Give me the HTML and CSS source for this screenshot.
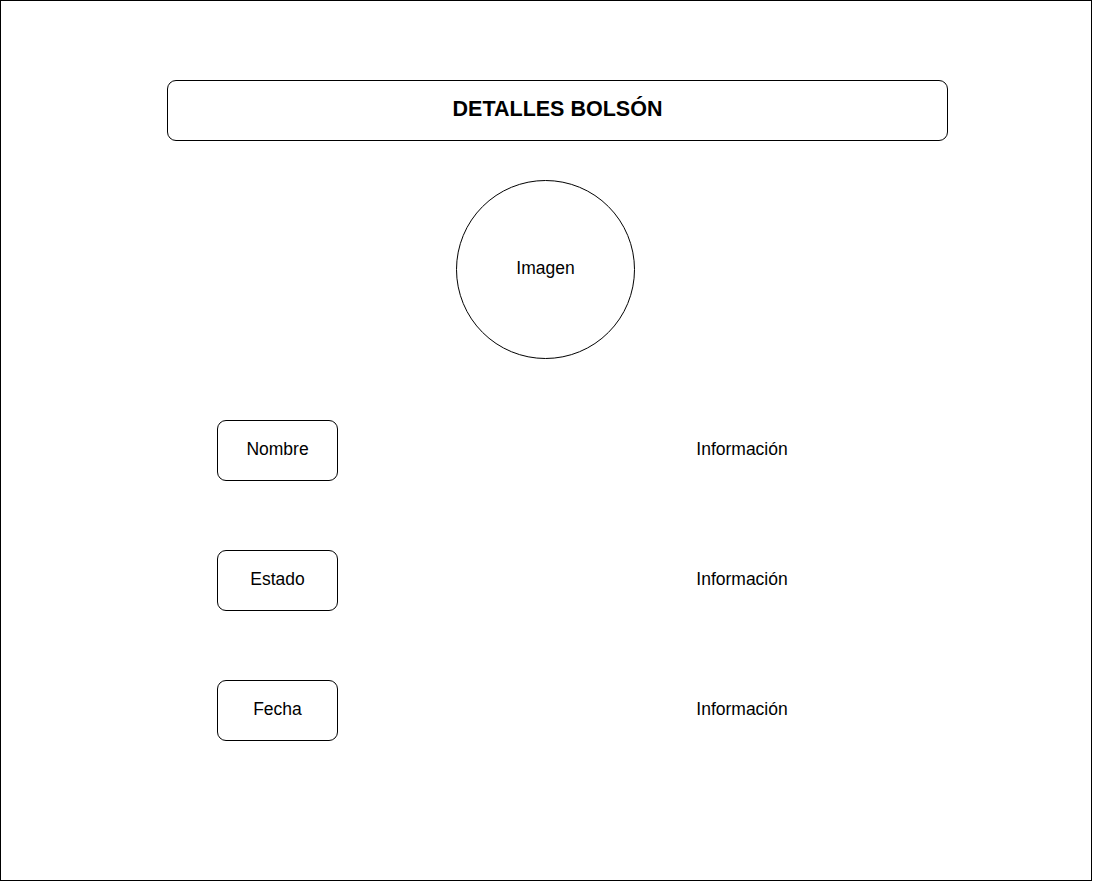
FILE: index.html
```html
<!DOCTYPE html>
<html lang="es">
<head>
<meta charset="utf-8">
<title>Detalles Bolsón</title>
<link rel="stylesheet" href="styles.css">
</head>
<body>
<div class="frame">
  <div class="header">DETALLES BOLSÓN</div>
  <div class="image-circle">Imagen</div>
  <div class="rows">
    <div class="row">
      <div class="label">Nombre</div>
      <div class="info">Información</div>
    </div>
    <div class="row">
      <div class="label">Estado</div>
      <div class="info">Información</div>
    </div>
    <div class="row">
      <div class="label">Fecha</div>
      <div class="info">Información</div>
    </div>
  </div>
</div>
</body>
</html>
```
FILE: styles.css
```css
html, body {
  margin: 0;
  padding: 0;
  background: #ffffff;
}
body {
  font-family: "Liberation Sans", Arial, Helvetica, sans-serif;
  color: #000000;
}
.frame {
  box-sizing: border-box;
  width: 1092px;
  height: 881px;
  border: 1px solid #000000;
  padding: 79px 0 0 166px;
}
.header {
  box-sizing: border-box;
  width: 781px;
  height: 61px;
  border: 1px solid #000000;
  border-radius: 9px;
  display: flex;
  align-items: center;
  justify-content: center;
  font-size: 21.5px;
  font-weight: bold;
  padding-bottom: 3px;
}
.image-circle {
  box-sizing: border-box;
  width: 179px;
  height: 179px;
  margin: 39px 0 0 289px;
  border: 1px solid #000000;
  border-radius: 50%;
  display: flex;
  align-items: center;
  justify-content: center;
  font-size: 17.5px;
  padding-bottom: 3px;
}
.rows {
  display: flex;
  flex-direction: column;
  gap: 69px;
  margin-top: 61px;
  padding-left: 50px;
}
.row {
  display: flex;
  align-items: center;
}
.label {
  box-sizing: border-box;
  width: 121px;
  height: 61px;
  border: 1px solid #000000;
  border-radius: 9px;
  display: flex;
  align-items: center;
  justify-content: center;
  font-size: 17.5px;
  padding-bottom: 2px;
}
.info {
  width: 200px;
  margin-left: 304px;
  text-align: center;
  font-size: 17.5px;
  padding-bottom: 2px;
}
```
